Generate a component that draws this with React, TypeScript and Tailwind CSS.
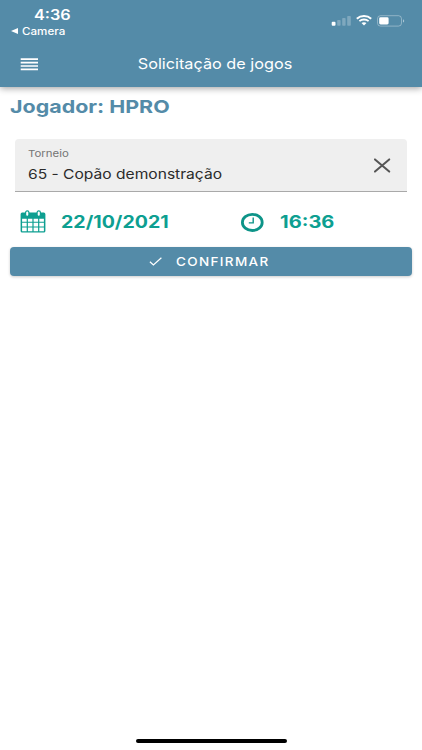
import {useState} from 'react'

const SignalIcon = () => (
  <svg width="20" height="12" viewBox="0 0 20 12" fill="#fff">
    <rect x="0.7" y="6.8" width="3.8" height="4" rx="1" />
    <rect x="6.2" y="5" width="3.4" height="5.8" rx="0.8" opacity="0.25" />
    <rect x="11.2" y="3" width="3.4" height="7.8" rx="0.8" opacity="0.25" />
    <rect x="16.2" y="1" width="3.6" height="9.8" rx="0.8" opacity="0.25" />
  </svg>
)

const WifiIcon = () => (
  <svg width="16" height="11" viewBox="0 0 16 11" fill="none" stroke="#fff">
    <path d="M0.8 3.7C4.8 0.1 11.2 0.1 15.2 3.7" strokeWidth="2" />
    <path d="M3.4 6.2C6 3.9 10 3.9 12.6 6.2" strokeWidth="1.8" />
    <path d="M5.5 8.1C7 6.9 9 6.9 10.5 8.1L8 10.6Z" fill="#fff" stroke="none" />
  </svg>
)

const BatteryIcon = () => (
  <svg width="28" height="12" viewBox="0 0 28 12">
    <rect
      x="0.5"
      y="0.7"
      width="24"
      height="10.4"
      rx="3"
      fill="none"
      stroke="#fff"
      strokeOpacity="0.35"
    />
    <rect x="2.2" y="2.3" width="9.4" height="7.2" rx="1.4" fill="#fff" />
    <path d="M26 4.2C27.6 4.8 27.6 7 26 7.6Z" fill="#fff" fillOpacity="0.5" />
  </svg>
)

const CalendarIcon = () => (
  <svg className="-mt-px" width="26" height="23" viewBox="0 0 26 23" fill="none">
    <path
      fill="#0d9f91"
      fillRule="evenodd"
      d="M2.2 2.6H23.8Q25.4 2.6 25.4 4.2V21Q25.4 22.6 23.8 22.6H2.2Q0.6 22.6 0.6 21V4.2Q0.6 2.6 2.2 2.6ZM2.1 8.8V11.7H6.7V8.8ZM7.9 8.8V11.7H12.4V8.8ZM13.6 8.8V11.7H18.1V8.8ZM19.3 8.8V11.7H23.9V8.8ZM2.1 12.8V16.4H6.7V12.8ZM7.9 12.8V16.4H12.4V12.8ZM13.6 12.8V16.4H18.1V12.8ZM19.3 12.8V16.4H23.9V12.8ZM2.1 17.5V21.3H6.7V17.5ZM7.9 17.5V21.3H12.4V17.5ZM13.6 17.5V21.3H18.1V17.5ZM19.3 17.5V21.3H23.9V17.5Z"
    />
    <rect x="5.6" y="0.9" width="3.3" height="5.4" rx="1.6" fill="#fff" stroke="#0d9f91" strokeWidth="1.2" />
    <rect x="17.1" y="0.9" width="3.3" height="5.4" rx="1.6" fill="#fff" stroke="#0d9f91" strokeWidth="1.2" />
  </svg>
)

const ClockIcon = () => (
  <svg className="-mt-px" width="24" height="20" viewBox="0 0 24 20" fill="none" stroke="#0d9488">
    <ellipse cx="12.3" cy="10.4" rx="9.9" ry="8.1" strokeWidth="2.8" />
    <path d="M13.2 5.6V10.9H8.8" strokeWidth="1.4" />
  </svg>
)

const Header = () => (
  <header className="relative h-[87px] bg-[#548ba8] text-white shadow-[0_1px_7px_rgba(0,0,0,0.4)]">
    <div className="flex h-[41px] justify-between">
      <div className="pt-[7px]">
        <div className="ml-[34px] h-4 w-fit origin-left scale-x-[1.16] text-[14px] leading-4 font-semibold">
          4:36
        </div>
        <div className="ml-[11px] flex h-4 items-center gap-1">
          <svg width="7" height="6" viewBox="0 0 7 6" fill="#fff">
            <path d="M0 3L7 0V6Z" />
          </svg>
          <span className="origin-left scale-x-[1.16] text-[10px] leading-4 font-medium">
            Camera
          </span>
        </div>
      </div>
      <div className="flex items-start gap-[5px] pt-[15px] pr-[17px]">
        <SignalIcon />
        <WifiIcon />
        <BatteryIcon />
      </div>
    </div>
    <div className="grid h-[46px] grid-cols-[48px_1fr_40px] items-center">
      <button className="ml-[20px]" aria-label="Menu" type="button">
        <svg width="18" height="13" viewBox="0 0 18 13" stroke="#fff" strokeWidth="1.7">
          <path d="M0.7 1.2H18M0.7 4.6H18M0.7 8H18M0.7 11.4H18" />
        </svg>
      </button>
      <h1 className="justify-self-center scale-x-[1.12] text-[14.5px] whitespace-nowrap">
        Solicitação de jogos
      </h1>
    </div>
  </header>
)

const App = () => {
  const [tournament, setTournament] = useState('65 - Copão demonstração')

  return (
    <div className="flex h-[750px] flex-col overflow-hidden bg-white font-['Inter','Liberation_Sans',sans-serif]">
      <Header />
      <main className="flex-1">
        <h2 className="ml-[10px] mt-[7px] h-[26px] w-fit origin-left scale-x-[1.19] text-[18px] leading-[26px] font-bold text-[#548ba8]">
          Jogador: HPRO
        </h2>

        <div className="mx-[15px] mt-[19px] flex h-[53px] items-center justify-between rounded-t border-b border-[#a9a9a9] bg-[#efefef] pr-4 pl-[13px]">
          <div>
            <div className="w-fit origin-left scale-x-[1.2] text-[9.5px] leading-[14px] text-[#757575]">
              Torneio
            </div>
            <div className="mt-[3px] w-fit origin-left scale-x-[1.155] text-[13.5px] leading-5 text-[#2b2b2b]">
              {tournament}
            </div>
          </div>
          <button type="button" aria-label="Limpar" onClick={() => setTournament('')}>
            <svg width="17" height="15" viewBox="0 0 17 15" stroke="#555" strokeWidth="2" strokeLinecap="round">
              <path d="M1 1.4L15.2 13.6M15.2 1.4L1 13.6" />
            </svg>
          </button>
        </div>

        <div className="mt-[9px] grid h-[42px] grid-cols-[220px_1fr] items-center pl-[20px] text-[17px] font-bold text-[#0d9f91]">
          <div className="flex items-center gap-[15px]">
            <CalendarIcon />
            <span className="mt-px origin-left scale-x-[1.15]">22/10/2021</span>
          </div>
          <div className="flex items-center gap-4">
            <ClockIcon />
            <span className="mt-px origin-left scale-x-[1.18]">16:36</span>
          </div>
        </div>

        <button
          className="mx-[10px] mt-[4px] flex h-[29px] w-[402px] items-center rounded bg-[#548ba8] pl-[139px] text-white shadow-[0_1px_3px_rgba(0,0,0,0.2)]"
          type="button"
        >
          <svg width="13" height="9" viewBox="0 0 13 9" fill="none" stroke="#fff" strokeWidth="1.2">
            <path d="M0.9 4.8L4.4 8L12.4 0.8" />
          </svg>
          <span className="ml-[14px] origin-left scale-x-[1.125] text-[12px] font-medium tracking-[1.2px]">
            CONFIRMAR
          </span>
        </button>
      </main>
      <div className="mx-auto mb-[7px] h-1 w-[151px] rounded-full bg-black" />
    </div>
  )
}

export default App
